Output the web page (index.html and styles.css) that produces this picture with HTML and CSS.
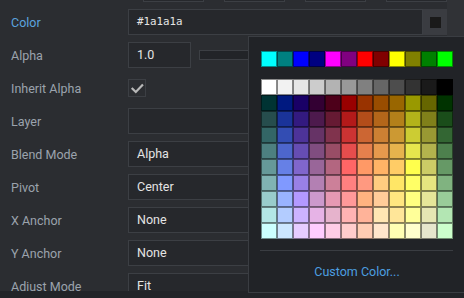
FILE: index.html
```html
<!DOCTYPE html>
<html>
<head>
<meta charset="utf-8">
<link rel="stylesheet" href="styles.css">
</head>
<body>
<div class="screen">
  <div class="main">
    <div class="panel">
      <div class="row partial">
        <div class="label"></div>
        <div class="vec">
          <span class="vl first"></span><div class="box"></div>
          <span class="vl"></span><div class="box"></div>
          <span class="vl"></span><div class="box"></div>
          <span class="vl"></span><div class="box"></div>
        </div>
      </div>
      <div class="row">
        <div class="label over">Color</div>
        <div class="colorfield">
          <div class="field mono">#1a1a1a</div>
          <div class="swatchbtn"><span class="chip"></span></div>
        </div>
      </div>
      <div class="row">
        <div class="label">Alpha</div>
        <div class="alpha">
          <div class="field small">1.0</div>
          <div class="track"></div>
        </div>
      </div>
      <div class="row">
        <div class="label">Inherit Alpha</div>
        <div class="checkcell">
          <div class="check">
            <svg width="18" height="18" viewBox="0 0 18 18"><path d="M4.5 9.8 L7.8 13 L14.2 6.3" fill="none" stroke="#b8b8b8" stroke-width="2.2" stroke-linecap="square"/></svg>
          </div>
        </div>
      </div>
      <div class="row">
        <div class="label">Layer</div>
        <div class="field"></div>
      </div>
      <div class="row">
        <div class="label">Blend Mode</div>
        <div class="field">Alpha</div>
      </div>
      <div class="row">
        <div class="label">Pivot</div>
        <div class="field">Center</div>
      </div>
      <div class="row">
        <div class="label">X Anchor</div>
        <div class="field">None</div>
      </div>
      <div class="row">
        <div class="label">Y Anchor</div>
        <div class="field">None</div>
      </div>
      <div class="row">
        <div class="label">Adjust Mode</div>
        <div class="field">Fit</div>
      </div>
    </div>
    <div class="side"></div>
  </div>
  <div class="footer"></div>

  <div class="popup">
    <div class="stdrow" id="std"></div>
    <div class="grid" id="grid"></div>
    <div class="sep"></div>
    <div class="custom">Custom Color...</div>
  </div>
</div>
<script src="app.js"></script>
</body>
</html>
```
FILE: styles.css
```css
html, body {
  margin: 0;
  padding: 0;
  background: #2b2d31;
}
.screen {
  position: relative;
  width: 464px;
  height: 298px;
  overflow: hidden;
  font-family: Roboto, "Noto Sans", sans-serif;
  font-size: 12.5px;
}
.main {
  display: flex;
  height: 291px;
  overflow: hidden;
}
.panel {
  width: 436px;
  padding-left: 11px;
  display: flex;
  flex-direction: column;
  gap: 7px;
}
.side {
  width: 17px;
  background: #303236;
}
.row {
  display: grid;
  grid-template-columns: 117px 1fr;
  height: 26px;
  flex: none;
  align-items: center;
}
.row.partial {
  margin-top: -24px;
}
.label {
  color: #9ba3ad;
  white-space: nowrap;
}
.label.over {
  color: #5ba3df;
}
.field {
  box-sizing: border-box;
  height: 26px;
  background: #26282c;
  border: 1px solid #3c3f44;
  color: #e4e4e4;
  padding-left: 8px;
  line-height: 24px;
}
.mono {
  font-family: "DejaVu Sans Mono", "Liberation Mono", monospace;
  font-size: 10.8px;
}
.vec {
  display: flex;
  align-items: center;
  height: 26px;
}
.vl {
  width: 20px;
  flex: none;
}
.vl.first { width: 15px; }
.box {
  width: 61px;
  height: 26px;
  box-sizing: border-box;
  border: 1px solid #3c3f44;
  background: #26282c;
  flex: none;
}
.colorfield {
  display: grid;
  grid-template-columns: 1fr 24px;
  height: 26px;
}
.swatchbtn {
  background: #3a3c41;
  display: flex;
  align-items: center;
  padding-left: 7px;
}
.chip {
  width: 11px;
  height: 11px;
  background: #1a1a1a;
}
.alpha {
  display: flex;
  align-items: center;
  gap: 8px;
}
.field.small {
  width: 63px;
  flex: none;
}
.track {
  flex: 1;
  height: 10px;
  box-sizing: border-box;
  border: 1px solid #3c3f44;
  background: #222428;
}
.checkcell {
  display: flex;
  align-items: center;
}
.check {
  width: 18px;
  height: 18px;
  box-sizing: border-box;
  border: 1px solid #3c3f44;
  background: #2b2d31;
  display: flex;
  align-items: center;
  justify-content: center;
}
.check svg { display: block; flex: none; }
.footer {
  height: 7px;
  background: #222428;
}
.popup {
  position: absolute;
  left: 248px;
  top: 36px;
  width: 216px;
  box-sizing: content-box;
  background: #212327;
  border: 1px solid #3a3d42;
  padding: 14px 12px 11px 12px;
}
.stdrow {
  display: grid;
  grid-template-columns: repeat(12, 16px);
  grid-auto-rows: 16px;
}
.grid {
  margin-top: 12px;
  display: grid;
  grid-template-columns: repeat(12, 16px);
  grid-auto-rows: 16px;
}
.cell {
  box-shadow: inset 0 0 0 1px rgba(0, 0, 0, 0.45);
}
.sep {
  margin-top: 11px;
  margin-left: -1px;
  width: 193px;
  height: 1px;
  background: #3a3d42;
}
.custom {
  margin-top: 12px;
  width: 192px;
  text-align: center;
  color: #4c9fe0;
  line-height: 18px;
}
```
FILE: app.js
```js
const std = ["#00ffff","#008080","#0000ff","#000080","#ff00ff","#800080","#ff0000","#800000","#ffff00","#808000","#008000","#00ff00"];
const raw = [
[255,255,255],[242,242,242],[230,230,230],[204,204,204],[179,179,179],[153,153,153],[128,128,128],[102,102,102],[77,77,77],[51,51,51],[26,26,26],[0,0,0],
[0,51,51],[0,25,128],[25,0,102],[51,0,51],[77,0,26],[153,0,0],[153,51,0],[153,77,0],[153,102,0],[153,153,0],[102,102,0],[0,51,0],
[38,77,77],[26,51,153],[51,26,128],[77,26,77],[102,26,51],[179,26,26],[179,77,26],[179,102,26],[179,128,26],[179,179,26],[128,128,26],[26,77,26],
[51,102,102],[51,77,179],[77,51,153],[102,51,102],[128,51,77],[204,51,51],[204,102,51],[204,128,51],[204,153,51],[204,204,51],[153,153,51],[51,102,51],
[77,128,128],[77,102,204],[102,77,179],[128,77,128],[153,77,102],[230,77,77],[230,128,77],[230,153,77],[230,179,77],[230,230,77],[179,179,77],[77,128,77],
[102,153,153],[102,128,230],[128,102,204],[153,102,153],[179,102,128],[255,102,102],[255,153,102],[255,179,102],[255,204,102],[255,255,77],[204,204,102],[102,153,102],
[128,179,179],[128,153,255],[153,128,230],[179,128,179],[204,128,153],[255,128,128],[255,153,128],[255,204,128],[255,230,102],[255,255,102],[230,230,128],[128,179,128],
[153,204,204],[153,179,255],[179,153,255],[204,153,204],[230,153,179],[255,153,153],[255,179,128],[255,204,153],[255,230,128],[255,255,128],[230,230,153],[153,204,153],
[179,230,230],[179,204,255],[204,179,255],[230,179,230],[230,179,204],[255,179,179],[255,179,153],[255,230,179],[255,230,153],[255,255,153],[230,230,179],[179,230,179],
[204,255,255],[204,230,255],[230,204,255],[255,204,255],[255,204,230],[255,204,204],[255,204,179],[255,230,204],[255,255,179],[255,255,204],[230,230,204],[204,255,204]
];
const s = document.getElementById("std");
std.forEach(c => { const d = document.createElement("div"); d.className = "cell"; d.style.background = c; s.appendChild(d); });
const g = document.getElementById("grid");
raw.forEach(c => { const d = document.createElement("div"); d.className = "cell"; d.style.background = "rgb(" + c.join(",") + ")"; g.appendChild(d); });
```
